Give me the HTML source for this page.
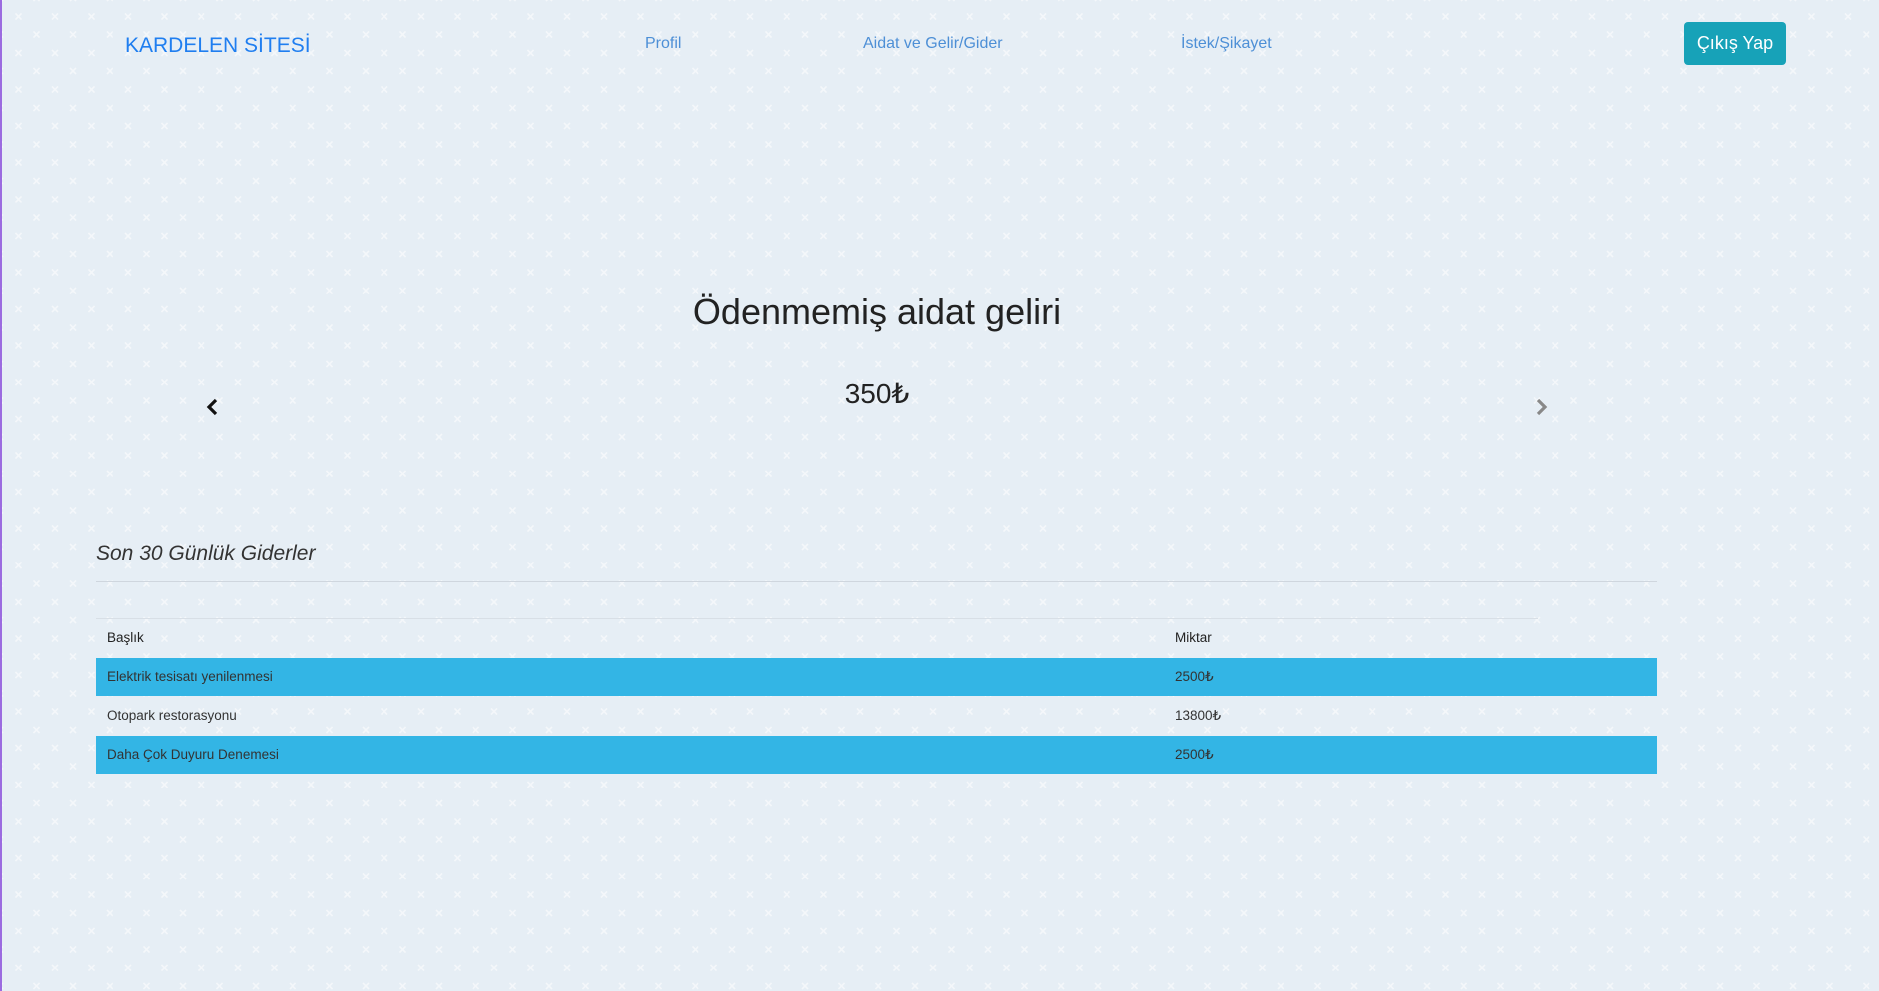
<!DOCTYPE html>
<html><head><meta charset="utf-8"><style>
html,body{margin:0;padding:0}
body{width:1879px;height:991px;overflow:hidden;position:relative;font-family:"Liberation Sans",sans-serif;
background-color:#e6eef5;
background-image:url("data:image/svg+xml,%3Csvg xmlns='http://www.w3.org/2000/svg' width='36.6' height='36.6'%3E%3Cg stroke='%23f4f7fa' stroke-width='1.6'%3E%3Cpath d='M15.3 13.3l6 6M21.3 13.3l-6 6M-3 -5l6 6M3 -5l-6 6M33.6 -5l6 6M39.6 -5l-6 6M-3 31.6l6 6M3 31.6l-6 6M33.6 31.6l6 6M39.6 31.6l-6 6'/%3E%3C/g%3E%3C/svg%3E");
}
.bl{position:absolute;left:0;top:0;width:2px;height:991px;background:#9b6be0}
.a{position:absolute;white-space:nowrap}
.nav{color:#4d8fd6;font-size:16px;top:35px}
.btn{left:1684px;top:22px;width:102px;height:43px;background:#17a2b8;border-radius:4px;color:#fff;font-size:18px;line-height:43px;text-align:center}
.row{position:absolute;left:96px;width:1561px;height:38px;font-size:13.5px;color:#333;line-height:38px}
.row span{position:absolute}
.blue{background:#33b5e5}
</style></head><body>
<div class="bl"></div>
<div class="a" style="left:125px;top:34px;font-size:21px;color:#1f7ef0">KARDELEN SİTESİ</div>
<div class="a nav" style="left:645px">Profil</div>
<div class="a nav" style="left:863px">Aidat ve Gelir/Gider</div>
<div class="a nav" style="left:1181px">İstek/Şikayet</div>
<div class="a btn">Çıkış Yap</div>

<div class="a" style="left:0;width:1754px;text-align:center;top:291px;font-size:36px;color:#222">Ödenmemiş aidat geliri</div>
<div class="a" style="left:0;width:1754px;text-align:center;top:377px;font-size:28px;color:#222">350₺</div>
<svg class="a" style="left:205px;top:398px" width="16" height="18" viewBox="0 0 16 18"><path d="M11 2L4 9l7 7" fill="none" stroke="#111" stroke-width="3.2"/></svg>
<svg class="a" style="left:1533px;top:398px" width="16" height="18" viewBox="0 0 16 18"><path d="M5 2l7 7-7 7" fill="none" stroke="#888" stroke-width="3.2"/></svg>

<div class="a" style="left:96px;top:542px;font-size:21px;font-style:italic;color:#333">Son 30 Günlük Giderler</div>
<div class="a" style="left:96px;top:581px;width:1561px;height:1px;background:#cfd6de"></div>
<div class="a" style="left:96px;top:618px;width:1442px;height:1px;background:#d8dfe6"></div>
<div class="row" style="top:619px;color:#222"><span style="left:11px">Başlık</span><span style="left:1079px">Miktar</span></div>
<div class="row blue" style="top:658px"><span style="left:11px">Elektrik tesisatı yenilenmesi</span><span style="left:1079px">2500₺</span></div>
<div class="row" style="top:697px"><span style="left:11px">Otopark restorasyonu</span><span style="left:1079px">13800₺</span></div>
<div class="row blue" style="top:736px"><span style="left:11px">Daha Çok Duyuru Denemesi</span><span style="left:1079px">2500₺</span></div>
</body></html>
